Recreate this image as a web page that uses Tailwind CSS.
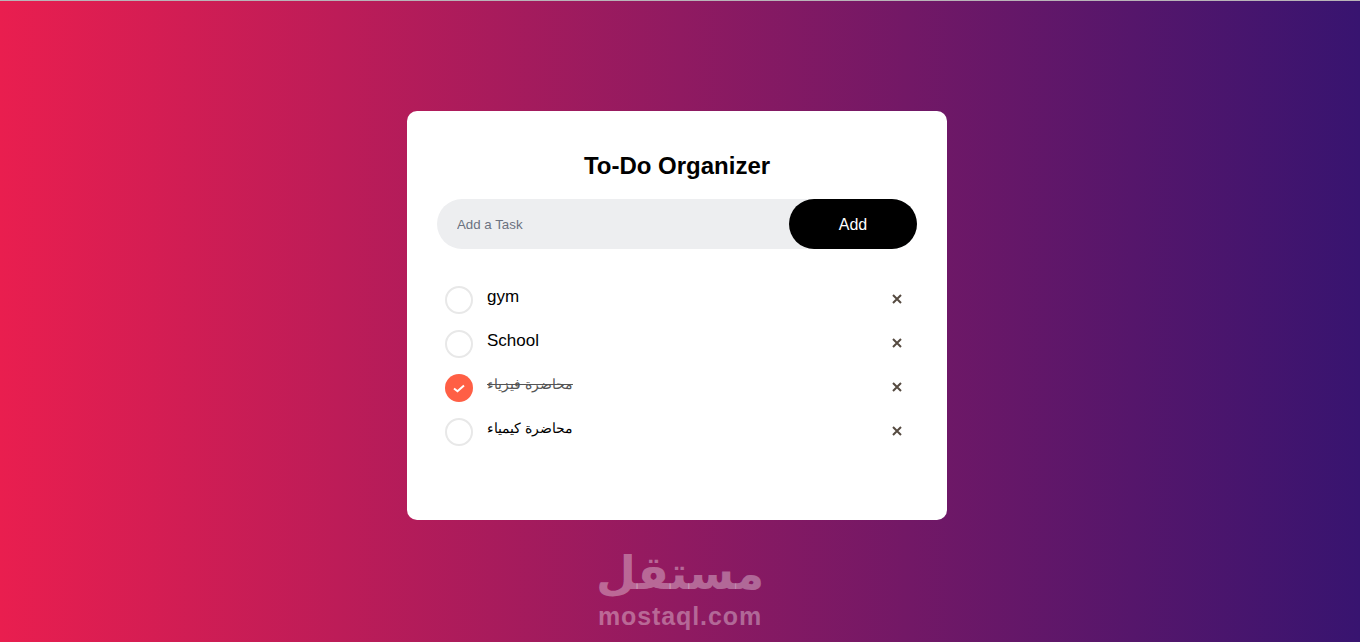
<!DOCTYPE html>
<html lang="en">
<head>
    <meta charset="UTF-8">
    <title>To-Do Organizer</title>
    <script src="https://cdn.jsdelivr.net/npm/@tailwindcss/browser@4"></script>
</head>
<body class="relative h-[642px] overflow-hidden font-['Liberation_Sans',sans-serif]">
    <div class="h-px bg-[#b9b4b8]"></div>
    <div class="h-[641px] pt-[110px] bg-linear-to-r/srgb from-[#e91e4f] via-[#901a61] to-[#381470]">
        <!-- Card -->
        <div class="ml-[407px] w-[540px] h-[409px] bg-white rounded-[10px] pt-[40px] px-[30px]">
            <h1 class="h-[30px] text-center text-[24px] leading-[30px] font-bold text-black">To-Do Organizer</h1>

            <div class="flex h-[50px] mt-[18px] rounded-full bg-[#edeef0]">
                <input type="text" placeholder="Add a Task" class="flex-1 min-w-0 pl-[20px] pt-px text-[13.3px] outline-none placeholder:text-[#6b7280]">
                <button class="w-[128px] h-[50px] pt-px rounded-full bg-black text-white text-[16px]">Add</button>
            </div>

            <ul class="mt-[26px]">
                <li class="flex h-[44px] pl-[8px] pr-[15px]">
                    <span class="w-[28px] h-[28px] mt-[11px] rounded-full border-2 border-[#e8e8e8]"></span>
                    <span class="ml-[14px] mt-[12px] text-[17px] leading-[20px] text-black">gym</span>
                    <svg class="ml-auto mt-[19px]" width="10" height="10" viewBox="0 0 10 10"><path d="M1 1L9 9M9 1L1 9" stroke="#554a40" stroke-width="2" fill="none"/></svg>
                </li>
                <li class="flex h-[44px] pl-[8px] pr-[15px]">
                    <span class="w-[28px] h-[28px] mt-[11px] rounded-full border-2 border-[#e8e8e8]"></span>
                    <span class="ml-[14px] mt-[12px] text-[17px] leading-[20px] text-black">School</span>
                    <svg class="ml-auto mt-[19px]" width="10" height="10" viewBox="0 0 10 10"><path d="M1 1L9 9M9 1L1 9" stroke="#554a40" stroke-width="2" fill="none"/></svg>
                </li>
                <li class="flex h-[44px] pl-[8px] pr-[15px]">
                    <span class="flex items-center justify-center w-[28px] h-[28px] mt-[11px] rounded-full bg-[#ff5f45]">
                        <svg width="14" height="14" viewBox="0 0 14 14"><path d="M2 7.5L5.5 10.2L12 4.5" stroke="#fff" stroke-width="2" fill="none"/></svg>
                    </span>
                    <span dir="rtl" class="ml-[14px] mt-[11px] text-[14.2px] leading-[20px] text-[#555] line-through">محاضرة فيزياء</span>
                    <svg class="ml-auto mt-[19px]" width="10" height="10" viewBox="0 0 10 10"><path d="M1 1L9 9M9 1L1 9" stroke="#554a40" stroke-width="2" fill="none"/></svg>
                </li>
                <li class="flex h-[44px] pl-[8px] pr-[15px]">
                    <span class="w-[28px] h-[28px] mt-[11px] rounded-full border-2 border-[#e8e8e8]"></span>
                    <span dir="rtl" class="ml-[14px] mt-[11px] text-[14.2px] leading-[20px] text-black">محاضرة كيمياء</span>
                    <svg class="ml-auto mt-[19px]" width="10" height="10" viewBox="0 0 10 10"><path d="M1 1L9 9M9 1L1 9" stroke="#554a40" stroke-width="2" fill="none"/></svg>
                </li>
            </ul>
        </div>
    </div>

    <!-- Watermark -->
    <div class="absolute left-[560px] top-[544px] w-[240px] flex flex-col items-center text-white/35 font-bold">
        <span dir="rtl" class="text-[46px] leading-[59px] font-['DejaVu_Sans',sans-serif]">مستقل</span>
        <span class="text-[25px] leading-[26px] tracking-[0.9px] font-['Liberation_Sans',sans-serif]">mostaql.com</span>
    </div>
</body>
</html>
